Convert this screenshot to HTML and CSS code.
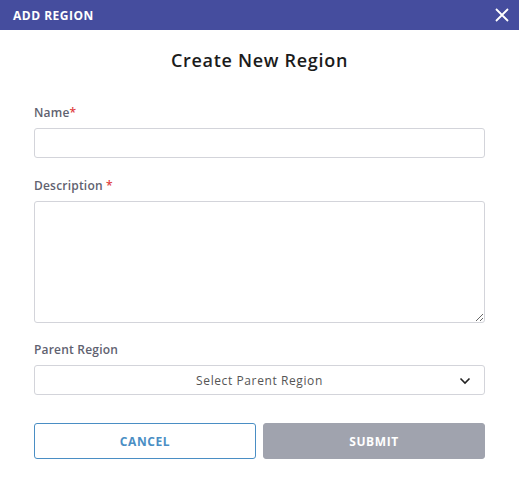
FILE: index.html
```html
<!DOCTYPE html>
<html>
<head>
<meta charset="utf-8">
<link rel="stylesheet" href="styles.css">
</head>
<body>
<div class="dialog">
  <div class="header">
    <span class="header-title">ADD REGION</span>
    <svg class="close" width="14" height="14" viewBox="0 0 14 14"><path d="M1 1 L13 13 M13 1 L1 13" stroke="#fff" stroke-width="1.8" fill="none"/></svg>
  </div>
  <div class="body">
    <h1 class="title">Create New Region</h1>
    <div class="field">
      <label class="label">Name<span class="req">*</span></label>
      <input class="input" type="text">
    </div>
    <div class="field">
      <label class="label">Description <span class="req">*</span></label>
      <textarea class="textarea"></textarea>
    </div>
    <div class="field field-select">
      <label class="label">Parent Region</label>
      <div class="select">
        <span class="select-text">Select Parent Region</span>
        <svg class="chev" width="12" height="8" viewBox="0 0 12 8"><path d="M1.5 1.5 L6 6 L10.5 1.5" stroke="#222" stroke-width="1.6" fill="none"/></svg>
      </div>
    </div>
    <div class="actions">
      <button class="btn btn-cancel">CANCEL</button>
      <button class="btn btn-submit">SUBMIT</button>
    </div>
  </div>
</div>
</body>
</html>
```
FILE: styles.css
```css
* { box-sizing: border-box; }
html, body { margin: 0; padding: 0; background: #fff; }
body { font-family: "Open Sans", "Liberation Sans", sans-serif; }
.dialog { width: 519px; }
.header {
  height: 30px;
  background: #454d9e;
  display: flex;
  align-items: center;
  justify-content: space-between;
  padding: 0 10px 0 13px;
}
.header-title { color: #fff; font-weight: 700; font-size: 12px; letter-spacing: 0.5px; }
.close { display: block; }
.body { padding: 0 34px; }
.title {
  margin: 18px 0 0;
  height: 24px;
  text-align: center;
  font-size: 18px;
  font-weight: 600;
  color: #1b1b1b;
  line-height: 24px;
  letter-spacing: 0.7px;
}
.field { display: flex; flex-direction: column; }
.field:nth-of-type(1) { margin-top: 33px; }
.field + .field { margin-top: 20px; }
.field + .field-select { margin-top: 19px; }
.label {
  font-size: 12px;
  font-weight: 600;
  color: #5f6270;
  line-height: 16px;
  margin-bottom: 7px;
  letter-spacing: 0.2px;
}
.req { color: #e0403f; }
.input {
  height: 30px;
  border: 1px solid #d3d4da;
  border-radius: 3px;
  font: inherit;
}
.textarea {
  height: 122px;
  border: 1px solid #d3d4da;
  border-radius: 3px;
  resize: vertical;
  font: inherit;
  display: block;
}
.select {
  height: 30px;
  border: 1px solid #d3d4da;
  border-radius: 3px;
  display: flex;
  align-items: center;
  position: relative;
}
.select-text { flex: 1; text-align: center; font-size: 12px; color: #555; letter-spacing: 0.6px; }
.chev { position: absolute; right: 13px; top: 11px; }
.actions { display: flex; gap: 7px; margin-top: 28px; }
.btn {
  flex: 1;
  height: 36px;
  border-radius: 3px;
  font-family: inherit;
  font-weight: 700;
  font-size: 12px;
  letter-spacing: 0.6px;
}
.btn-cancel { background: #fff; border: 1px solid #4a8ec4; color: #4a8ec4; }
.btn-submit { background: #a0a3ae; border: 1px solid #a0a3ae; color: #fff; }
```
